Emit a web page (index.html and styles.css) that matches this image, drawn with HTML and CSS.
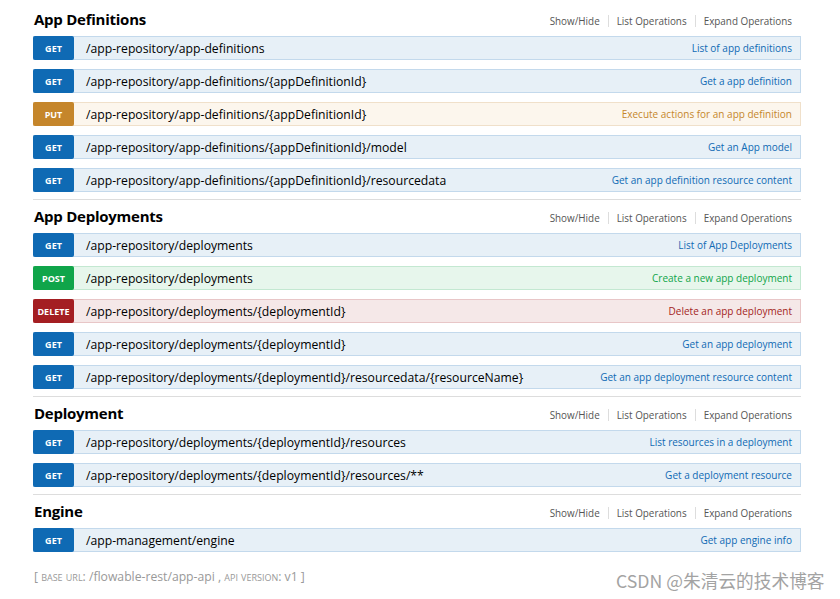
FILE: index.html
```html
<!DOCTYPE html>
<html>
<head>
<meta charset="utf-8">
<link rel="stylesheet" href="styles.css">
</head>
<body>
<div class="wrap">
  <section class="resource">
    <div class="res-head">
      <h2>App Definitions</h2>
      <ul class="options">
        <li>Show/Hide</li>
        <li>List Operations</li>
        <li>Expand Operations</li>
      </ul>
    </div>
    <ul class="ops">
      <li class="op get"><span class="method">GET</span><span class="path">/app-repository/app-definitions</span><span class="desc">List of app definitions</span></li>
      <li class="op get"><span class="method">GET</span><span class="path">/app-repository/app-definitions/{appDefinitionId}</span><span class="desc">Get a app definition</span></li>
      <li class="op put"><span class="method">PUT</span><span class="path">/app-repository/app-definitions/{appDefinitionId}</span><span class="desc">Execute actions for an app definition</span></li>
      <li class="op get"><span class="method">GET</span><span class="path">/app-repository/app-definitions/{appDefinitionId}/model</span><span class="desc">Get an App model</span></li>
      <li class="op get"><span class="method">GET</span><span class="path">/app-repository/app-definitions/{appDefinitionId}/resourcedata</span><span class="desc">Get an app definition resource content</span></li>
    </ul>
  </section>
  <section class="resource">
    <div class="res-head">
      <h2>App Deployments</h2>
      <ul class="options">
        <li>Show/Hide</li>
        <li>List Operations</li>
        <li>Expand Operations</li>
      </ul>
    </div>
    <ul class="ops">
      <li class="op get"><span class="method">GET</span><span class="path">/app-repository/deployments</span><span class="desc">List of App Deployments</span></li>
      <li class="op post"><span class="method">POST</span><span class="path">/app-repository/deployments</span><span class="desc">Create a new app deployment</span></li>
      <li class="op delete"><span class="method">DELETE</span><span class="path">/app-repository/deployments/{deploymentId}</span><span class="desc">Delete an app deployment</span></li>
      <li class="op get"><span class="method">GET</span><span class="path">/app-repository/deployments/{deploymentId}</span><span class="desc">Get an app deployment</span></li>
      <li class="op get"><span class="method">GET</span><span class="path">/app-repository/deployments/{deploymentId}/resourcedata/{resourceName}</span><span class="desc">Get an app deployment resource content</span></li>
    </ul>
  </section>
  <section class="resource">
    <div class="res-head">
      <h2>Deployment</h2>
      <ul class="options">
        <li>Show/Hide</li>
        <li>List Operations</li>
        <li>Expand Operations</li>
      </ul>
    </div>
    <ul class="ops">
      <li class="op get"><span class="method">GET</span><span class="path">/app-repository/deployments/{deploymentId}/resources</span><span class="desc">List resources in a deployment</span></li>
      <li class="op get"><span class="method">GET</span><span class="path">/app-repository/deployments/{deploymentId}/resources/**</span><span class="desc">Get a deployment resource</span></li>
    </ul>
  </section>
  <section class="resource">
    <div class="res-head">
      <h2>Engine</h2>
      <ul class="options">
        <li>Show/Hide</li>
        <li>List Operations</li>
        <li>Expand Operations</li>
      </ul>
    </div>
    <ul class="ops">
      <li class="op get"><span class="method">GET</span><span class="path">/app-management/engine</span><span class="desc">Get app engine info</span></li>
    </ul>
  </section>
  <div class="footer">[ <span class="sc">base url</span>: /flowable-rest/app-api , <span class="sc">api version</span>: v1 ]</div>
</div>
<div class="watermark">CSDN @朱清云的技术博客</div>
</body>
</html>
```
FILE: styles.css
```css
* { box-sizing: border-box; }
html, body { margin: 0; padding: 0; background: #fff; }
body {
  font-family: "Open Sans", "Noto Sans", sans-serif;
  color: #000;
  position: relative;
  width: 840px;
  height: 599px;
  overflow: hidden;
}
.wrap {
  width: 768px;
  margin-left: 33px;
  padding-top: 3px;
}
.resource {
  border-top: 1px solid #ddd;
  padding-bottom: 7px;
}
.resource:first-child { border-top-width: 0; }
.res-head {
  display: flex;
  align-items: baseline;
  justify-content: space-between;
  height: 33px;
  padding: 5px 9px 0 1px;
}
.res-head h2 {
  margin: 0;
  font-size: 15px;
  letter-spacing: -0.25px;
  font-weight: 700;
  line-height: 22px;
}
.options {
  list-style: none;
  margin: 0;
  padding: 0;
  display: flex;
  font-size: 9.9px;
  color: #555;
}
.options li { padding: 0 8px; border-left: 1px solid #ddd; line-height: 12px; }
.options li:first-child { border-left: 0; }
.options li:last-child { padding-right: 0; }
.ops {
  list-style: none;
  margin: 0;
  padding: 0;
  display: flex;
  flex-direction: column;
  gap: 9px;
}
.op {
  display: flex;
  align-items: center;
  height: 24px;
  border: 1px solid;
}
.method {
  width: 41px;
  height: 24px;
  margin: -1px 0 -1px -1px;
  border-radius: 2px;
  color: #fff;
  font-weight: 700;
  font-size: 9px;
  display: flex;
  align-items: center;
  justify-content: center;
  flex: none;
}
.path {
  padding-left: 12px;
  font-size: 12.2px;
  flex: 1;
  white-space: nowrap;
}
.desc {
  font-size: 10px;
  padding-right: 8px;
  white-space: nowrap;
}
.get { background: #e7f0f7; border-color: #c3d9ec; }
.get .method { background: #0f6ab4; }
.get .desc { color: #0f6ab4; }
.put { background: #fcf6ed; border-color: #f0e0ca; }
.put .method { background: #c5862b; }
.put .desc { color: #c5862b; }
.post { background: #e7f6ec; border-color: #c3e8d1; }
.post .method { background: #10a54a; }
.post .desc { color: #10a54a; }
.delete { background: #f5e8e8; border-color: #e8c6c7; }
.delete .method { background: #a41e22; }
.delete .desc { color: #a41e22; }
.footer {
  margin-top: 9px;
  padding-left: 1px;
  font-size: 12.2px;
  color: #999;
}
.sc { font-variant: small-caps; }
.watermark {
  position: absolute;
  left: 616px;
  top: 568px;
  font-family: "Noto Sans CJK SC", sans-serif;
  font-size: 17.7px;
  line-height: 24px;
  color: #a3a3a3;
  white-space: nowrap;
}
```
